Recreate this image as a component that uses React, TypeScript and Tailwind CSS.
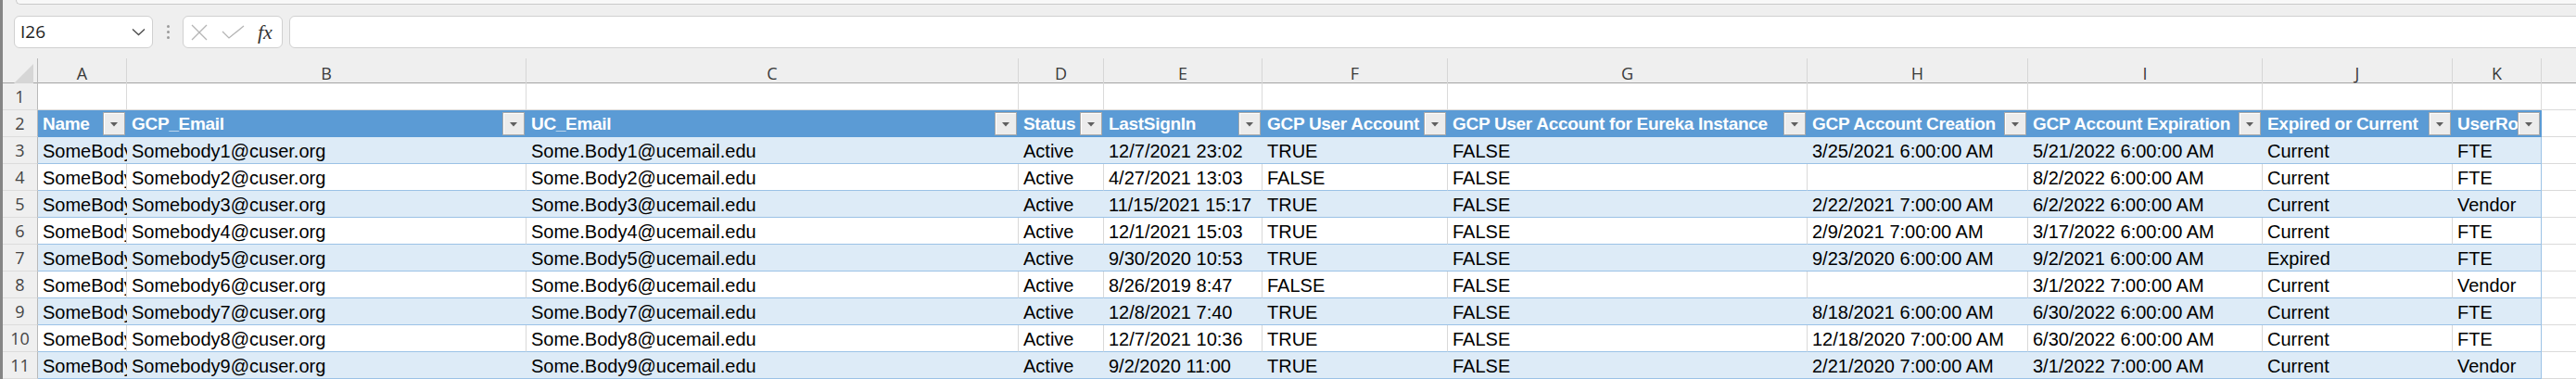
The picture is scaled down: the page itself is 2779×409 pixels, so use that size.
import React from "react";

const COLS =
  "grid grid-cols-[38px_96px_431px_531px_92px_171px_200px_388px_238px_253px_205px_96px_37px]";

const letters = ["A", "B", "C", "D", "E", "F", "G", "H", "I", "J", "K", ""];

const headers = [
  "Name",
  "GCP_Email",
  "UC_Email",
  "Status",
  "LastSignIn",
  "GCP User Account",
  "GCP User Account for Eureka Instance",
  "GCP Account Creation",
  "GCP Account Expiration",
  "Expired or Current",
  "UserRole",
];

const data: string[][] = [
  ["SomeBody1", "Somebody1@cuser.org", "Some.Body1@ucemail.edu", "Active", "12/7/2021 23:02", "TRUE", "FALSE", "3/25/2021 6:00:00 AM", "5/21/2022 6:00:00 AM", "Current", "FTE"],
  ["SomeBody2", "Somebody2@cuser.org", "Some.Body2@ucemail.edu", "Active", "4/27/2021 13:03", "FALSE", "FALSE", "", "8/2/2022 6:00:00 AM", "Current", "FTE"],
  ["SomeBody3", "Somebody3@cuser.org", "Some.Body3@ucemail.edu", "Active", "11/15/2021 15:17", "TRUE", "FALSE", "2/22/2021 7:00:00 AM", "6/2/2022 6:00:00 AM", "Current", "Vendor"],
  ["SomeBody4", "Somebody4@cuser.org", "Some.Body4@ucemail.edu", "Active", "12/1/2021 15:03", "TRUE", "FALSE", "2/9/2021 7:00:00 AM", "3/17/2022 6:00:00 AM", "Current", "FTE"],
  ["SomeBody5", "Somebody5@cuser.org", "Some.Body5@ucemail.edu", "Active", "9/30/2020 10:53", "TRUE", "FALSE", "9/23/2020 6:00:00 AM", "9/2/2021 6:00:00 AM", "Expired", "FTE"],
  ["SomeBody6", "Somebody6@cuser.org", "Some.Body6@ucemail.edu", "Active", "8/26/2019 8:47", "FALSE", "FALSE", "", "3/1/2022 7:00:00 AM", "Current", "Vendor"],
  ["SomeBody7", "Somebody7@cuser.org", "Some.Body7@ucemail.edu", "Active", "12/8/2021 7:40", "TRUE", "FALSE", "8/18/2021 6:00:00 AM", "6/30/2022 6:00:00 AM", "Current", "FTE"],
  ["SomeBody8", "Somebody8@cuser.org", "Some.Body8@ucemail.edu", "Active", "12/7/2021 10:36", "TRUE", "FALSE", "12/18/2020 7:00:00 AM", "6/30/2022 6:00:00 AM", "Current", "FTE"],
  ["SomeBody9", "Somebody9@cuser.org", "Some.Body9@ucemail.edu", "Active", "9/2/2020 11:00", "TRUE", "FALSE", "2/21/2020 7:00:00 AM", "3/1/2022 7:00:00 AM", "Current", "Vendor"],
];

function RowNum({ n }: { n: number }) {
  return (
    <div className="flex items-center justify-center border-r border-b border-r-[#b9b9b9] border-b-[#dcdcdc] bg-[#efefef] pt-[1px] font-['Open_Sans','Noto_Sans',sans-serif] text-[18px] text-[#444444]">
      {n}
    </div>
  );
}

function FilterButton() {
  return (
    <div className="mr-[2px] flex h-[25px] w-[24px] shrink-0 items-center justify-center border border-[#a9a9a9] bg-[#ececec] shadow-[inset_1px_1px_0_#ffffff]">
      <svg width="10" height="6" viewBox="0 0 10 6">
        <polygon points="1,1 9,1 5,5.5" fill="#5f5f5f" />
      </svg>
    </div>
  );
}

export default function App() {
  return (
    <div className="relative h-[409px] w-[2779px] overflow-hidden border-l-[3px] border-[#858585] bg-[#efefef] font-['Liberation_Sans',Arial,sans-serif]">
      {/* Top area */}
      <div className="flex h-[63px] flex-col">
        <div className="ml-[14px] h-[5px] rounded-bl-[8px] border-b border-l border-[#c9c9c9] bg-[#f8f8f8]" />
        <div className="mt-[12px] flex h-[35px] pl-[12px]">
          {/* Name box */}
          <div className="flex h-full w-[150px] items-center justify-between rounded-[6px] border border-[#d0d0d0] bg-white pl-[6px] pr-[7px]">
            <span className="font-['Open_Sans','Noto_Sans',sans-serif] text-[19px] text-[#222222]">I26</span>
            <svg width="15" height="9" viewBox="0 0 15 9">
              <polyline points="1,1.5 7.5,7.5 14,1.5" fill="none" stroke="#4a4a4a" strokeWidth="1.3" />
            </svg>
          </div>
          {/* dots */}
          <div className="flex w-[32px] flex-col items-center justify-center gap-[3px]">
            <div className="h-[3px] w-[3px] rounded-full bg-[#9a9a9a]" />
            <div className="h-[3px] w-[3px] rounded-full bg-[#9a9a9a]" />
            <div className="h-[3px] w-[3px] rounded-full bg-[#9a9a9a]" />
          </div>
          {/* X check fx */}
          <div className="flex h-full w-[108px] items-center rounded-[6px] border border-[#d0d0d0] bg-white pl-[8px]">
            <svg width="18" height="18" viewBox="0 0 18 18">
              <line x1="1" y1="1" x2="17" y2="17" stroke="#b5b5b5" strokeWidth="1.3" />
              <line x1="17" y1="1" x2="1" y2="17" stroke="#b5b5b5" strokeWidth="1.3" />
            </svg>
            <svg width="25" height="15" viewBox="0 0 25 15" className="ml-[15px]">
              <polyline points="1,7 8,14 24,1" fill="none" stroke="#b5b5b5" strokeWidth="1.3" />
            </svg>
            <span className="ml-[14px] font-['Liberation_Serif',serif] text-[22px] italic leading-none text-[#333333]">
              fx
            </span>
          </div>
          {/* formula bar */}
          <div className="ml-[7px] mr-[-12px] h-full flex-1 rounded-[6px] border border-[#d0d0d0] bg-white" />
        </div>
      </div>

      {/* Column headers */}
      <div className={`${COLS} h-[27px] border-b border-[#a3a3a3]`}>
        <div className="flex items-end justify-end border-r border-[#b9b9b9] pb-[2px] pr-[3px]">
          <svg width="22" height="22" viewBox="0 0 22 22">
            <polygon points="21,0 21,21 0,21" fill="#d6d6d6" />
          </svg>
        </div>
        {letters.map((l, i) => (
          <div
            key={i}
            className={`flex items-center justify-center pt-[3px] font-['Open_Sans','Noto_Sans',sans-serif] text-[18px] text-[#3a3a3a] ${
              i < 11 ? "border-r border-[#d6d6d6]" : ""
            }`}
          >
            {l}
          </div>
        ))}
      </div>

      {/* Row 1 */}
      <div className={`${COLS} h-[29px]`}>
        <RowNum n={1} />
        {letters.map((_, i) => (
          <div
            key={i}
            className={`border-b border-[#dadada] bg-white ${i < 11 ? "border-r" : ""}`}
          />
        ))}
      </div>

      {/* Row 2: table header */}
      <div className={`${COLS} h-[29px]`}>
        <RowNum n={2} />
        {headers.map((h, i) => (
          <div key={i} className="flex items-center overflow-hidden bg-[#5b9bd5]">
            <span className="min-w-0 flex-1 overflow-hidden whitespace-nowrap pl-[5px] pt-[1px] text-[19px] font-bold tracking-[-0.3px] text-white">
              {h}
            </span>
            <FilterButton />
          </div>
        ))}
        <div className="border-b border-[#dadada] bg-white" />
      </div>

      {/* Body rows */}
      {data.map((row, r) => {
        const banded = r % 2 === 0;
        return (
          <div key={r} className={`${COLS} h-[29px]`}>
            <RowNum n={r + 3} />
            {row.map((v, i) => (
              <div
                key={i}
                className={`overflow-hidden whitespace-nowrap border-b border-b-[#9bc2e6] pl-[5px] pt-[3px] text-[20px] leading-[24px] text-black ${
                  banded ? "bg-[#ddebf7]" : "bg-white"
                } ${
                  i === 10
                    ? "border-r border-r-[#9bc2e6]"
                    : banded
                    ? ""
                    : "border-r border-r-[#d9d9d9]"
                }`}
              >
                {v}
              </div>
            ))}
            <div className="border-b border-[#dadada] bg-white" />
          </div>
        );
      })}
    </div>
  );
}
